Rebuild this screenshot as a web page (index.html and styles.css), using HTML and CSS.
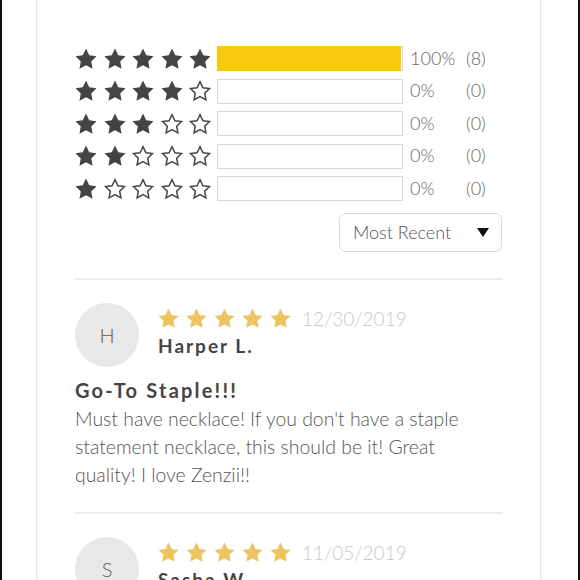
FILE: index.html
```html
<!DOCTYPE html>
<html>
<head>
<meta charset="utf-8">
<link rel="stylesheet" href="styles.css">
</head>
<body>
<svg width="0" height="0" class="defs">
  <defs>
    <path id="star" d="M12 0.6 L15.53 7.95 L23.5 9.0 L17.71 14.65 L19.15 22.6 L12 18.8 L4.85 22.6 L6.29 14.65 L0.5 9.0 L8.47 7.95 Z"/>
  </defs>
</svg>
<div class="frame">
  <div class="card">
    <div class="summary">
      <div class="row">
        <div class="stars"><svg class="s full" viewBox="0 0 24 24"><use href="#star"/></svg><svg class="s full" viewBox="0 0 24 24"><use href="#star"/></svg><svg class="s full" viewBox="0 0 24 24"><use href="#star"/></svg><svg class="s full" viewBox="0 0 24 24"><use href="#star"/></svg><svg class="s full" viewBox="0 0 24 24"><use href="#star"/></svg></div>
        <div class="bar"><div class="fill" style="width:100%"></div></div>
        <div class="pct">100%</div>
        <div class="cnt">(8)</div>
      </div>
      <div class="row">
        <div class="stars"><svg class="s full" viewBox="0 0 24 24"><use href="#star"/></svg><svg class="s full" viewBox="0 0 24 24"><use href="#star"/></svg><svg class="s full" viewBox="0 0 24 24"><use href="#star"/></svg><svg class="s full" viewBox="0 0 24 24"><use href="#star"/></svg><svg class="s empty" viewBox="0 0 24 24"><use href="#star"/></svg></div>
        <div class="bar"></div>
        <div class="pct">0%</div>
        <div class="cnt">(0)</div>
      </div>
      <div class="row">
        <div class="stars"><svg class="s full" viewBox="0 0 24 24"><use href="#star"/></svg><svg class="s full" viewBox="0 0 24 24"><use href="#star"/></svg><svg class="s full" viewBox="0 0 24 24"><use href="#star"/></svg><svg class="s empty" viewBox="0 0 24 24"><use href="#star"/></svg><svg class="s empty" viewBox="0 0 24 24"><use href="#star"/></svg></div>
        <div class="bar"></div>
        <div class="pct">0%</div>
        <div class="cnt">(0)</div>
      </div>
      <div class="row">
        <div class="stars"><svg class="s full" viewBox="0 0 24 24"><use href="#star"/></svg><svg class="s full" viewBox="0 0 24 24"><use href="#star"/></svg><svg class="s empty" viewBox="0 0 24 24"><use href="#star"/></svg><svg class="s empty" viewBox="0 0 24 24"><use href="#star"/></svg><svg class="s empty" viewBox="0 0 24 24"><use href="#star"/></svg></div>
        <div class="bar"></div>
        <div class="pct">0%</div>
        <div class="cnt">(0)</div>
      </div>
      <div class="row">
        <div class="stars"><svg class="s full" viewBox="0 0 24 24"><use href="#star"/></svg><svg class="s empty" viewBox="0 0 24 24"><use href="#star"/></svg><svg class="s empty" viewBox="0 0 24 24"><use href="#star"/></svg><svg class="s empty" viewBox="0 0 24 24"><use href="#star"/></svg><svg class="s empty" viewBox="0 0 24 24"><use href="#star"/></svg></div>
        <div class="bar"></div>
        <div class="pct">0%</div>
        <div class="cnt">(0)</div>
      </div>
    </div>
    <div class="sort-wrap">
      <div class="sort"><span class="sort-label">Most Recent</span><span class="caret"></span></div>
    </div>
    <div class="review">
      <div class="head">
        <div class="avatar">H</div>
        <div class="meta">
          <div class="line1">
            <div class="gstars"><svg class="g" viewBox="0 0 24 24"><use href="#star"/></svg><svg class="g" viewBox="0 0 24 24"><use href="#star"/></svg><svg class="g" viewBox="0 0 24 24"><use href="#star"/></svg><svg class="g" viewBox="0 0 24 24"><use href="#star"/></svg><svg class="g" viewBox="0 0 24 24"><use href="#star"/></svg></div>
            <span class="date">12/30/2019</span>
          </div>
          <div class="name">Harper L.</div>
        </div>
      </div>
      <div class="title">Go-To Staple!!!</div>
      <p class="body">Must have necklace! If you don't have a staple statement necklace, this should be it! Great quality! I love Zenzii!!</p>
    </div>
    <div class="review">
      <div class="head">
        <div class="avatar">S</div>
        <div class="meta">
          <div class="line1">
            <div class="gstars"><svg class="g" viewBox="0 0 24 24"><use href="#star"/></svg><svg class="g" viewBox="0 0 24 24"><use href="#star"/></svg><svg class="g" viewBox="0 0 24 24"><use href="#star"/></svg><svg class="g" viewBox="0 0 24 24"><use href="#star"/></svg><svg class="g" viewBox="0 0 24 24"><use href="#star"/></svg></div>
            <span class="date">11/05/2019</span>
          </div>
          <div class="name">Sasha W.</div>
        </div>
      </div>
    </div>
  </div>
</div>
</body>
</html>
```

FILE: styles.css
```css
html, body {
  margin: 0;
  padding: 0;
  background: #fff;
  overflow: hidden;
}
body {
  font-family: Lato, "Open Sans", "Liberation Sans", sans-serif;
  color: #555;
}
.defs {
  position: absolute;
  width: 0;
  height: 0;
}
.frame {
  width: 580px;
  height: 580px;
  box-sizing: border-box;
  border-left: 2px solid #111;
  border-right: 2px solid #111;
  overflow: hidden;
}
.card {
  margin: 0 37px 0 34px;
  border-left: 1px solid #e6e6e6;
  border-right: 1px solid #e6e6e6;
  padding: 46px 38px 0 38px;
  height: 700px;
}
.summary {
  display: flex;
  flex-direction: column;
  gap: 7.5px;
}
.row {
  display: flex;
  align-items: center;
  height: 25px;
}
.stars {
  display: flex;
  gap: 6.5px;
  width: 132px;
}
.s {
  width: 22px;
  height: 22px;
  flex: none;
  overflow: visible;
}
.s.full use {
  fill: #444;
}
.s.empty use {
  fill: #fff;
  stroke: #444;
  stroke-width: 1.8;
  stroke-linejoin: miter;
  transform: scale(0.9);
  transform-origin: 12px 12.5px;
}
.bar {
  margin-left: 10px;
  width: 186px;
  height: 25px;
  box-sizing: border-box;
  border: 1px solid #d6d6d6;
  background: #fff;
}
.fill {
  background: #f8ca0c;
  margin: -1px;
  height: 25px;
}
.pct {
  margin-left: 7px;
  width: 56px;
  font-size: 18px;
  font-weight: 300;
  color: #666;
  margin-top: -2px;
}
.cnt {
  font-size: 18px;
  font-weight: 300;
  color: #666;
  margin-top: -2px;
}
.sort-wrap {
  display: flex;
  justify-content: flex-end;
  margin-top: 12px;
  padding-bottom: 26px;
  border-bottom: 2px solid #ececec;
}
.sort {
  width: 163px;
  height: 39px;
  box-sizing: border-box;
  border: 1px solid #d8d8d8;
  border-radius: 7px;
  display: flex;
  align-items: center;
  justify-content: space-between;
  padding: 0 12px 0 13px;
}
.sort-label {
  font-size: 18px;
  font-weight: 300;
  color: #555;
  margin-top: -2px;
}
.caret {
  width: 0;
  height: 0;
  border-left: 6px solid transparent;
  border-right: 6px solid transparent;
  border-top: 9px solid #111;
}
.review {
  padding-top: 23px;
  border-bottom: 2px solid #ececec;
}
.head {
  display: flex;
  gap: 19px;
}
.avatar {
  width: 64px;
  height: 64px;
  border-radius: 50%;
  background: #e8e8e8;
  display: flex;
  align-items: center;
  justify-content: center;
  font-size: 20px;
  font-weight: 300;
  color: #5a5a5a;
  flex: none;
}
.meta {
  display: flex;
  flex-direction: column;
  padding-top: 4px;
}
.line1 {
  display: flex;
  align-items: center;
  gap: 11px;
}
.gstars {
  display: flex;
  gap: 7px;
}
.g {
  width: 21px;
  height: 21px;
}
.g use {
  fill: #eec462;
}
.date {
  font-size: 19px;
  font-weight: 300;
  color: #c8c8c8;
}
.name {
  margin-top: 4px;
  font-size: 19px;
  font-weight: 700;
  letter-spacing: 2px;
  color: #444;
}
.title {
  margin-top: 11px;
  font-size: 20px;
  font-weight: 700;
  letter-spacing: 2.2px;
  color: #444;
}
.body {
  margin: 3px 0 0 0;
  max-width: 400px;
  font-size: 19.4px;
  font-weight: 300;
  line-height: 28px;
  color: #555;
  padding-bottom: 23px;
}
```
